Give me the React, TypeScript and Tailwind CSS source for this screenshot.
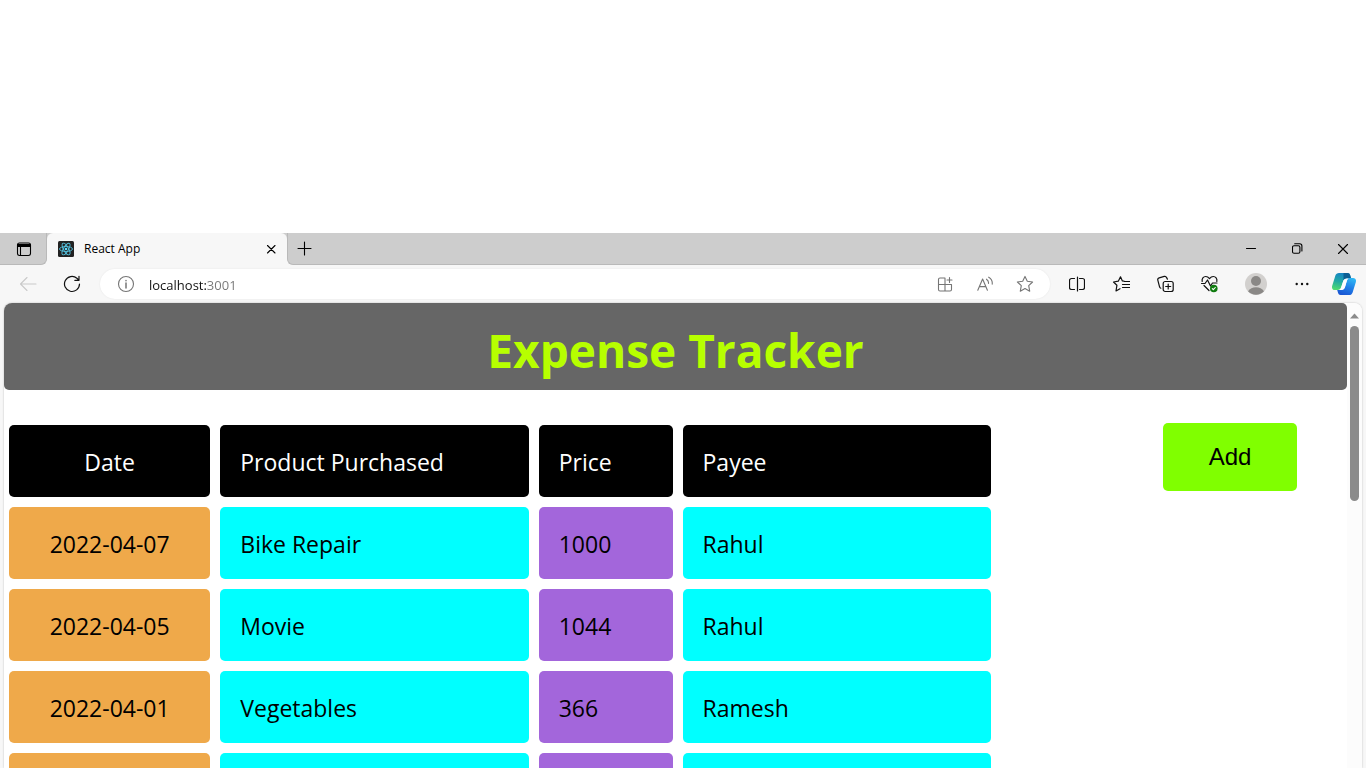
import type { ReactNode } from "react";

type Expense = { date: string; product: string; price: string; payee: string };

const expenses: Expense[] = [
  { date: "2022-04-07", product: "Bike Repair", price: "1000", payee: "Rahul" },
  { date: "2022-04-05", product: "Movie", price: "1044", payee: "Rahul" },
  { date: "2022-04-01", product: "Vegetables", price: "366", payee: "Ramesh" },
  { date: "", product: "", price: "", payee: "" },
];

function Icon({ size = 18, children }: { size?: number; children: ReactNode }) {
  return (
    <svg
      width={size}
      height={size}
      viewBox={`0 0 ${size} ${size}`}
      fill="none"
      stroke="currentColor"
      strokeWidth="1.1"
      strokeLinecap="round"
      strokeLinejoin="round"
      aria-hidden="true"
    >
      {children}
    </svg>
  );
}

function IconButton({ label, className, children }: { label: string; className: string; children: ReactNode }) {
  return (
    <button type="button" aria-label={label} className={`flex h-full shrink-0 items-center justify-center ${className}`}>
      {children}
    </button>
  );
}

function TabStrip() {
  return (
    <div className="flex h-8 shrink-0 bg-[#f7f7f7]">
      <div className="flex w-[47px] rounded-br-md border-r border-b border-[#b9b9b9] bg-[#cdcdcd]">
        <IconButton label="Tab actions menu" className="w-12">
          <Icon size={16}>
            <rect x="1.5" y="2" width="13" height="12.5" rx="2" />
            <path d="M2 3.5h12v2H2z" fill="currentColor" />
            <path d="M4.5 6v8" />
          </Icon>
        </IconButton>
      </div>
      <div className="flex w-60 bg-[#cdcdcd]">
        <div className="flex flex-1 items-center rounded-t-md bg-[#f7f7f7] pr-2 pl-[11px]">
          <svg width="16" height="16" viewBox="0 0 16 16" aria-hidden="true">
            <rect width="16" height="16" rx="1.5" fill="#222" />
            <g fill="none" stroke="#53c1de" strokeWidth="0.9">
              <ellipse cx="8" cy="8" rx="6.5" ry="2.5" />
              <ellipse cx="8" cy="8" rx="6.5" ry="2.5" transform="rotate(60 8 8)" />
              <ellipse cx="8" cy="8" rx="6.5" ry="2.5" transform="rotate(120 8 8)" />
            </g>
            <circle cx="8" cy="8" r="1.3" fill="#61dafb" />
          </svg>
          <span className="ml-2.5 flex-1 text-[12px] text-black">React App</span>
          <button type="button" aria-label="Close tab" className="flex size-4 items-center justify-center">
            <Icon size={10}>
              <path d="M1.500 1.500l7.500 7.500M9 1.500L1.500 9" />
            </Icon>
          </button>
        </div>
      </div>
      <div className="flex flex-1 rounded-bl-md border-b border-l border-[#b9b9b9] bg-[#cdcdcd]">
        <IconButton label="New tab" className="w-8">
          <Icon size={15}>
            <path d="M7.5 1v13M1 7.5h13" />
          </Icon>
        </IconButton>
        <div className="flex-1" />
        <IconButton label="Minimize" className="w-[46px]">
          <Icon size={11}>
            <path d="M.5 5.5h9" />
          </Icon>
        </IconButton>
        <IconButton label="Restore" className="w-[46px]">
          <Icon size={11}>
            <rect x="0.5" y="2.8" width="7.4" height="7.4" rx="1.5" />
            <path d="M2.700 .8h5a2.2 2.2 0 0 1 2.2 2.2v5" />
          </Icon>
        </IconButton>
        <IconButton label="Close window" className="w-[46px]">
          <Icon size={12}>
            <path d="M1.500 1.500l9 9M10.500 1.500l-9 9" />
          </Icon>
        </IconButton>
      </div>
    </div>
  );
}

function Toolbar() {
  return (
    <div className="flex h-[38px] shrink-0 bg-[#f7f7f7] pr-px pl-1.5 text-[#111]">
      <IconButton label="Back" className="w-11 text-[#c9c9c9]">
        <Icon>
          <path d="M1.5 9H17M8 2.5L1.5 9L8 15.5" />
        </Icon>
      </IconButton>
      <IconButton label="Refresh" className="w-11">
        <Icon>
          <path d="M16.5 9A7.5 7.5 0 1 1 13.9 3.3L16 5.2M16 1.3v4h-4.2" strokeWidth="1.2" />
        </Icon>
      </IconButton>
      <div className="my-1 ml-1.5 flex flex-1 items-center rounded-full bg-white pr-[5px] pl-[17px] text-[#757575] shadow-[0_0_2px_rgba(0,0,0,0.08)]">
        <Icon>
          <circle cx="9" cy="9" r="7.5" />
          <path d="M9 8v5M9 5.4v.3" strokeWidth="1.5" />
        </Icon>
        <input
          aria-label="Address"
          defaultValue="localhost:3001"
          className="ml-3.5 h-full min-w-0 flex-1 bg-[linear-gradient(to_right,#111_57px,#767676_57px)] bg-clip-text pt-0.5 text-[13px] text-transparent outline-none"
        />
        <IconButton label="Apps" className="w-10">
          <Icon size={16}>
            <path d="M1.5 3.5a1.5 1.5 0 0 1 1.5-1.5h5v13H3a1.5 1.5 0 0 1-1.5-1.5zM1.5 8.5h13v5a1.5 1.5 0 0 1-1.5 1.5H8M12.5 1.5v5M10 4h5" />
          </Icon>
        </IconButton>
        <IconButton label="Read aloud" className="w-10">
          <Icon size={16}>
            <path d="M.8 14.3L5.6 3L10.4 14.3M2.4 10.6h6.4M9.5 3.2c1.5 1 2.2 2.4 2 4.2M11.7 1.2c2.7 1.6 3.9 4 3.5 7" />
          </Icon>
        </IconButton>
        <IconButton label="Add to favorites" className="w-10">
          <Icon>
            <path d="M9 1.4l2.3 4.9 5.3.7-3.9 3.7 1 5.5L9 13.6l-4.7 2.6 1-5.5L1.4 7l5.3-.7z" />
          </Icon>
        </IconButton>
      </div>
      <div className="ml-[5px] flex">
        <IconButton label="Split screen" className="w-11">
          <Icon size={16}>
            <path d="M5.5 2.5h-3a2 2 0 0 0-2 2v7a2 2 0 0 0 2 2h3M10.5 2.5h3a2 2 0 0 1 2 2v7a2 2 0 0 1-2 2h-3" strokeWidth="1.2" />
            <path d="M8.500 1v14" strokeWidth="1.2" />
          </Icon>
        </IconButton>
        <IconButton label="Favorites" className="w-11">
          <Icon>
            <path d="M12 6.200L10.400 6L8.500 1.800L6.300 6.200L1.500 7l3.400 3.300-.9 5.700 4-2.300M12.500 6.500h5M10.500 9.500h7M10.500 12.500h7" strokeWidth="1.2" />
          </Icon>
        </IconButton>
        <IconButton label="Collections" className="w-11">
          <Icon>
            <rect x="7.2" y="6.5" width="10" height="10" rx="2" strokeWidth="1.2" />
            <path d="M12.2 9v5M9.7 11.5h5M4.8 13.2a2 2 0 0 1-1.3-1.5L1.8 5.2a2 2 0 0 1 1.4-2.4l5-1.4a2 2 0 0 1 2.4 1.2l.8 1.5" strokeWidth="1.2" />
          </Icon>
        </IconButton>
        <IconButton label="Browser essentials" className="w-11">
          <Icon>
            <path d="M2.2 6.5C1.500 3.3 3.500 1.5 5.700 1.5C7.500 1.5 8.500 2.4 9.500 3.7C10.500 2.4 11.500 1.5 13.300 1.5C15.500 1.5 17.500 3.3 16.800 6.5M1.500 8.5h3.5L7.500 5l3 6 2-3h4.5M4 10.5L9 15.5" strokeWidth="1.2" />
            <circle cx="13.8" cy="13.5" r="3.8" fill="#107c10" stroke="none" />
            <path d="M12.3 13.7l1 1 2-2.2" stroke="#fff" />
          </Icon>
        </IconButton>
        <IconButton label="Profile" className="w-[50px]">
          <svg width="22" height="22" viewBox="0 0 22 22" aria-hidden="true">
            <circle cx="11" cy="11" r="11" fill="#d2d0ce" />
            <circle cx="11" cy="8" r="5" fill="#8a8886" />
            <path d="M3 18.3C5 15.5 7.5 14.3 11 14.3s6 1.2 8 4A11 11 0 0 1 3 18.3z" fill="#8a8886" />
          </svg>
        </IconButton>
        <IconButton label="Settings and more" className="w-[42px]">
          <svg width="14" height="4" viewBox="0 0 14 4" fill="#111" aria-hidden="true">
            <circle cx="1.7" cy="2" r="1.2" />
            <circle cx="7" cy="2" r="1.2" />
            <circle cx="12.3" cy="2" r="1.2" />
          </svg>
        </IconButton>
        <IconButton label="Copilot" className="w-[42px]">
          <svg width="24" height="22" viewBox="0 0 24 22" aria-hidden="true">
            <defs>
              <linearGradient id="copilotLeft" x1="0.5" y1="0" x2="0.3" y2="1">
                <stop offset="0" stopColor="#1683c4" />
                <stop offset="0.5" stopColor="#20a9a5" />
                <stop offset="1" stopColor="#4fdc6e" />
              </linearGradient>
              <linearGradient id="copilotRight" x1="0.7" y1="0" x2="0.3" y2="1">
                <stop offset="0" stopColor="#2fb6f3" />
                <stop offset="0.5" stopColor="#1f7fe8" />
                <stop offset="1" stopColor="#1a55d2" />
              </linearGradient>
            </defs>
            <path d="M7 0h8.500c1.500 0 2.200.8 2.600 2l1 3.500h-3.600c-2.500 0-3.700.8-4.400 3L9.200 14c-.6 2-1.600 3-3.700 3H3c-2.400 0-3.500-1.800-2.800-4.200L3.400 2.600C3.900 1 5.200 0 7 0z" fill="url(#copilotLeft)" />
            <path d="M11.500 0h4c1.500 0 2.200.8 2.600 2l1 3.500h-3.600c-2 0-3.200.5-4 2z" fill="#0b5f94" />
            <path d="M17.500 5H21c2.400 0 3.500 1.800 2.800 4.200l-3.200 10.200c-.5 1.600-1.800 2.600-3.600 2.600H8.500c-1.300 0-2-.8-2.400-2l-.9-3h3.600c2.500 0 3.600-1 4.200-3l1.500-5.500C15 6.200 15.700 5 17.500 5z" fill="url(#copilotRight)" />
            <path d="M15 5.500h2c-1.200.3-1.800 1.300-2.200 2.800L13 14c-.6 2-1.700 3-4 3H7c1.300-.4 1.900-1.400 2.300-2.800l1.800-5.700c.6-2 1.700-3 3.900-3z" fill="#fafcff" />
          </svg>
        </IconButton>
      </div>
    </div>
  );
}

function Cell({ className, children }: { className: string; children: ReactNode }) {
  return <div className={`h-[72px] rounded-[5px] px-5 pt-[19px] leading-9 ${className}`}>{children}</div>;
}

function ExpenseTable() {
  return (
    <table className="w-full table-fixed border-collapse text-[23px]">
      <colgroup>
        <col className="w-[21.3%]" />
        <col className="w-[32.1%]" />
        <col className="w-[14.5%]" />
        <col />
      </colgroup>
      <thead>
        <tr className="text-left text-white">
          <th scope="col" className="p-[5px] font-normal"><Cell className="bg-black text-center">Date</Cell></th>
          <th scope="col" className="p-[5px] font-normal"><Cell className="bg-black">Product Purchased</Cell></th>
          <th scope="col" className="p-[5px] font-normal"><Cell className="bg-black">Price</Cell></th>
          <th scope="col" className="p-[5px] font-normal"><Cell className="bg-black">Payee</Cell></th>
        </tr>
      </thead>
      <tbody className="text-black">
        {expenses.map((expense, index) => (
          <tr key={index}>
            <td className="p-[5px]"><Cell className="bg-[#efa94a] text-center">{expense.date}</Cell></td>
            <td className="p-[5px]"><Cell className="bg-[#00ffff]">{expense.product}</Cell></td>
            <td className="p-[5px]"><Cell className="bg-[#a366db]">{expense.price}</Cell></td>
            <td className="p-[5px]"><Cell className="bg-[#00ffff]">{expense.payee}</Cell></td>
          </tr>
        ))}
      </tbody>
    </table>
  );
}

function Scrollbar() {
  return (
    <div className="flex w-[15px] shrink-0 flex-col items-center bg-[#fcfcfc] pt-2.5" aria-hidden="true">
      <svg width="9" height="6" viewBox="0 0 9 6">
        <path d="M4.500 .5L9 5.500H0z" fill="#8b8b8b" />
      </svg>
      <div className="mt-[7px] h-[175px] w-[9px] rounded-full bg-[#8b8b8b]" />
    </div>
  );
}

export default function App() {
  return (
    <div className="flex h-screen flex-col overflow-hidden bg-white pt-[233px] font-['Open_Sans','Noto_Sans',sans-serif]">
      <TabStrip />
      <Toolbar />
      <div className="flex min-h-0 flex-1 bg-[#f7f7f7] px-1">
        <div className="flex min-w-0 flex-1 overflow-hidden rounded-t-lg bg-white shadow-[0_0_2px_rgba(0,0,0,0.25)]">
          <main className="min-w-0 flex-1">
            <h1 className="rounded-[5px] bg-[#666] pt-3 pb-[5px] text-center text-[46px] leading-[70px] font-bold text-[#b7ff00]">
              Expense Tracker
            </h1>
            <div className="mt-[30px] flex items-start">
              <div className="min-w-0 flex-1">
                <ExpenseTable />
              </div>
              <div className="flex w-[351px] shrink-0 justify-end pt-[3px] pr-[50px]">
                <button
                  type="button"
                  className="h-[68px] w-[134px] rounded-[5px] bg-[#80ff00] font-['Liberation_Sans',Arial,sans-serif] text-2xl text-black"
                >
                  Add
                </button>
              </div>
            </div>
          </main>
          <Scrollbar />
        </div>
      </div>
    </div>
  );
}
